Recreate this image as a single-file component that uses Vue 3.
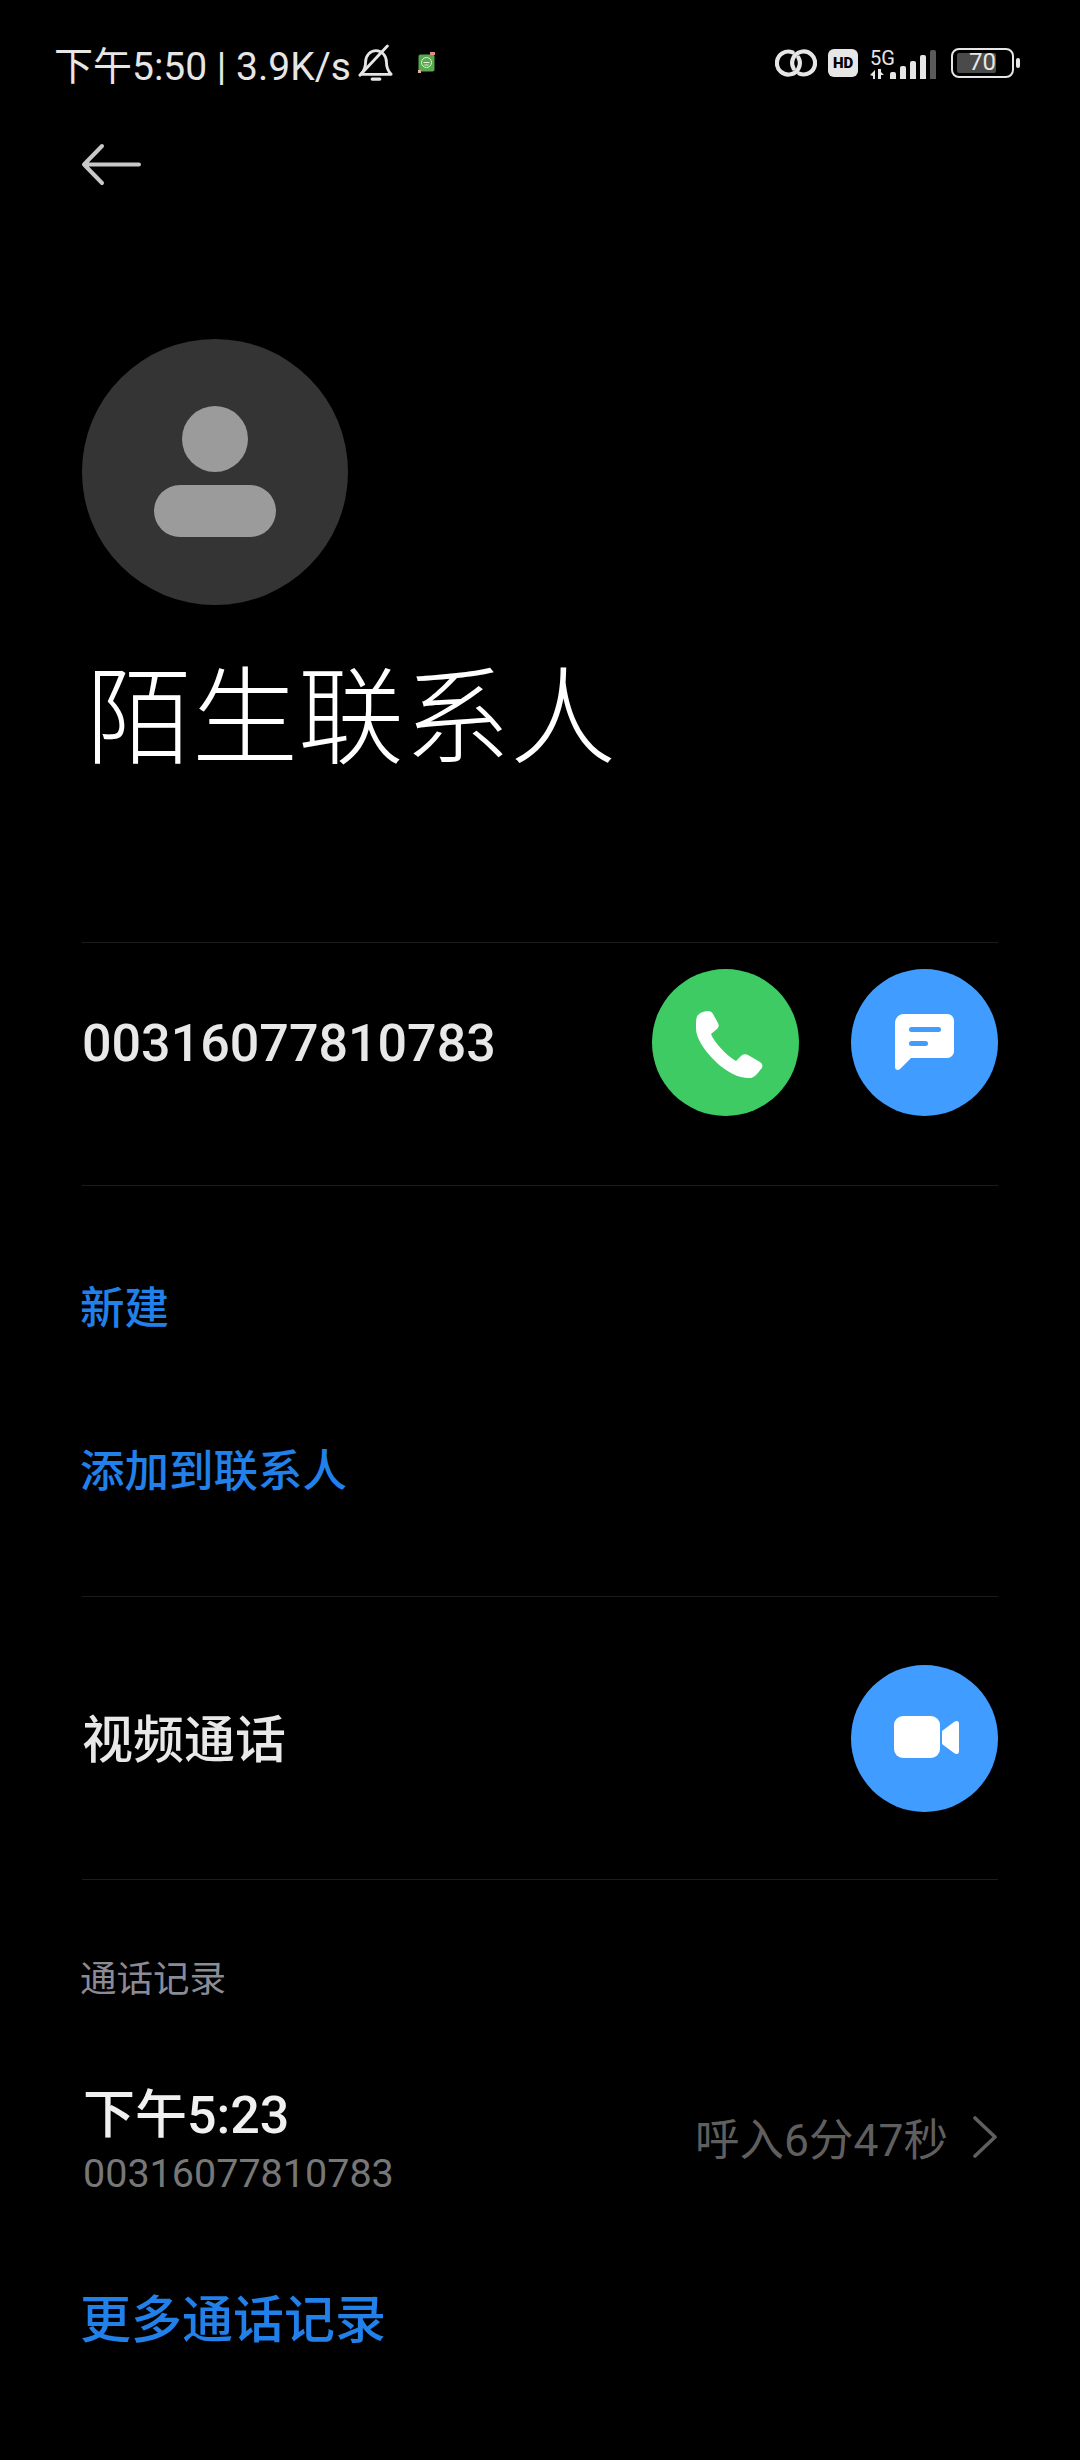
<template>
  <div class="page">
    <div class="status-bar">
      <div class="status-left">
        <span class="status-text">下午5:50 | 3.9K/s</span>
        <svg class="bell" width="36" height="38" viewBox="0 0 38 40" fill="none" stroke="#e6e6e6" stroke-width="3" stroke-linecap="round" stroke-linejoin="round">
          <path d="M3 32h32c-4-4-5-7-5-13 0-7-5-12-11-12S8 12 8 19c0 6-1 9-5 13z" />
          <path d="M2 33L31 2" />
          <path d="M15 37h8" stroke-width="3.4" />
        </svg>
        <svg class="app-icon" width="18" height="22" viewBox="0 0 18 22">
          <rect x="0.5" y="2.5" width="16" height="17" rx="2" fill="#5aa84f" />
          <circle cx="8.5" cy="10.5" r="5" fill="none" stroke="#dff0d8" stroke-width="1" />
          <path d="M5.5 10.5h6M6.5 13h4" stroke="#dff0d8" stroke-width="1" />
          <rect x="12" y="0" width="5" height="3" fill="#e08a8a" />
          <rect x="0" y="18" width="3" height="3" fill="#e0b0a0" />
        </svg>
      </div>
      <div class="status-right">
        <svg class="link-icon" width="42" height="30" viewBox="-1 0 44 30" fill="none" stroke="#e6e6e6" stroke-width="4.4" stroke-linecap="round">
          <path d="M17.500 3.900A12 12 0 1 0 23.500 9.200" />
          <path d="M24.500 26.100A12 12 0 1 0 18.500 20.800" />
        </svg>
        <div class="hd">HD</div>
        <div class="signal">
          <div class="signal-type">
            <span class="five-g">5G</span>
            <svg width="15" height="10" viewBox="0 0 15 10" fill="#e6e6e6">
              <path d="M0 6l5-5v9H3V7zM8 0h3v10H8zM11 3l3 3h-3z" />
            </svg>
          </div>
          <div class="bars">
            <span v-for="(h, i) in bars" :key="i" class="bar" :class="{ off: i === 4 }" :style="{ height: h + 'px' }"></span>
          </div>
        </div>
        <div class="battery">
          <div class="battery-body">
            <div class="battery-fill"></div>
            <span class="battery-num">70</span>
          </div>
          <div class="battery-cap"></div>
        </div>
      </div>
    </div>

    <div class="back-row">
      <svg width="60" height="44" viewBox="0 0 60 44" fill="none" stroke="#c8c8c8" stroke-width="4" stroke-linecap="round" stroke-linejoin="round">
        <path d="M58 21.500H3M21 3L3 21.500 21 40" />
      </svg>
    </div>

    <div class="avatar">
      <div class="avatar-head"></div>
      <div class="avatar-body"></div>
    </div>
    <h1 class="name">陌生联系人</h1>

    <div class="row number-row">
      <span class="number">00316077810783</span>
      <div class="actions">
        <div class="circle green">
          <svg width="90" height="90" viewBox="0 -3 90 90" fill="#fff">
            <path d="M17 14C20 11 24 10 27 10C29 10 31 11 32 13L37 22C38 24 38 26 36 28L30 33C33 41 45 54 55 60L60 55C62 53 65 53 67 54L79 61C82 63 82 66 80 68C77 72 74 76 70 77C60 78 46 72 34 60C22 48 14 36 15 25C15 20 15 16 17 14Z" />
          </svg>
        </div>
        <div class="circle blue">
          <svg width="60" height="58" viewBox="0 0 60 58">
            <path fill="#fff" d="M9 0h43c4 0 7 3 7 7v30c0 4-3 7-7 7H16L5 55c-2 2-5 1-5-2V9c0-5 4-9 9-9z" />
            <rect x="14" y="13" width="32" height="5" rx="2.500" fill="#409cff" />
            <rect x="14" y="27" width="19" height="5" rx="2.500" fill="#409cff" />
          </svg>
        </div>
      </div>
    </div>

    <div class="links">
      <a class="link">新建</a>
      <a class="link">添加到联系人</a>
    </div>

    <div class="row video-row">
      <span class="video-label">视频通话</span>
      <div class="circle blue">
        <svg class="video-icon" width="66" height="44" viewBox="0 0 66 44" fill="#fff">
          <rect x="0" y="0" width="46" height="42" rx="9" />
          <path d="M48 15l12-9c3-2 5-1 5 2v27c0 3-2 4-5 2L48 28z" />
        </svg>
      </div>
    </div>

    <div class="history">
      <div class="section-title">通话记录</div>
      <div class="call">
        <div class="call-left">
          <div class="call-time">下午5:23</div>
          <div class="call-number">00316077810783</div>
        </div>
        <div class="call-right">
          <span>呼入6分47秒</span>
          <svg width="26" height="42" viewBox="0 0 26 42" fill="none" stroke="#5f5f5f" stroke-width="3.600" stroke-linecap="round" stroke-linejoin="round">
            <path d="M3 2l20 19L3 40" />
          </svg>
        </div>
      </div>
      <a class="link more">更多通话记录</a>
    </div>
  </div>
</template>

<script setup>
const bars = [7, 13, 18, 24, 29]
</script>

<style>
html, body {
  margin: 0;
  background: #000;
}
</style>

<style scoped>
.page {
  width: 1080px;
  height: 2460px;
  overflow: hidden;
  background: #000;
  color: #fff;
  font-family: Roboto, "Noto Sans CJK SC", sans-serif;
  box-sizing: border-box;
}

.status-bar {
  display: flex;
  justify-content: space-between;
  align-items: center;
  height: 44px;
  padding: 41px 60px 0 54px;
}

.status-left,
.status-right {
  display: flex;
  align-items: center;
}

.status-text {
  font-size: 39px;
  color: #e6e6e6;
  white-space: nowrap;
}

.bell { margin-left: 7px; }
.app-icon { margin-left: 24px; }

.link-icon { margin-right: 11px; }

.hd {
  width: 30px;
  height: 28px;
  margin-right: 12px;
  border-radius: 6px;
  background: #e6e6e6;
  color: #000;
  font-size: 15px;
  font-weight: 900;
  line-height: 28px;
  text-align: center;
}

.signal {
  display: flex;
  align-items: flex-end;
  gap: 2px;
  height: 31px;
  width: 67px;
  margin-right: 14px;
}

.signal-type {
  display: flex;
  flex-direction: column;
  width: 18px;
}

.five-g {
  font-size: 20px;
  line-height: 21px;
  color: #e6e6e6;
  white-space: nowrap;
}

.bars {
  display: flex;
  align-items: flex-end;
  gap: 4px;
}

.bar {
  width: 6px;
  background: #e6e6e6;
  border-radius: 2px 2px 0 0;
}

.bar.off { background: #5a5a5a; }

.battery {
  display: flex;
  align-items: center;
  gap: 2px;
}

.battery-body {
  position: relative;
  width: 63px;
  height: 30px;
  border: 2.500px solid #e6e6e6;
  border-radius: 8px;
  box-sizing: border-box;
  padding: 3px 4px;
}

.battery-fill {
  width: 39px;
  height: 100%;
  background: #4a4a4a;
  border-radius: 2px;
}

.battery-num {
  position: absolute;
  inset: 0;
  font-size: 24px;
  line-height: 25px;
  text-align: center;
  color: #e6e6e6;
}

.battery-cap {
  width: 4px;
  height: 10px;
  border-radius: 2px;
  background: #e6e6e6;
}

.back-row {
  padding: 58px 0 0 81px;
  height: 44px;
}

.back-row svg { display: block; }

.avatar {
  width: 266px;
  height: 266px;
  margin: 152px 0 0 82px;
  border-radius: 50%;
  background: #343434;
  display: flex;
  flex-direction: column;
  align-items: center;
  padding-top: 67px;
  box-sizing: border-box;
}

.avatar-head {
  width: 66px;
  height: 66px;
  border-radius: 50%;
  background: #9b9b9b;
}

.avatar-body {
  width: 122px;
  height: 52px;
  margin-top: 13px;
  border-radius: 26px;
  background: #9b9b9b;
}

.name {
  margin: 44px 0 0 86px;
  font-size: 106px;
  line-height: 120px;
  font-weight: 300;
  font-family: "Noto Sans CJK SC", sans-serif;
  letter-spacing: 0;
}

.row {
  display: flex;
  justify-content: space-between;
  align-items: center;
  margin: 0 82px;
  border-top: 1px solid #1c1c1c;
  border-bottom: 1px solid #1c1c1c;
}

.number-row {
  height: 199px;
  padding-bottom: 43px;
  margin-top: 173px;
}

.number {
  margin-top: 2px;
  font-size: 52px;
  font-weight: 500;
  color: #e8e8e8;
}

.actions {
  display: flex;
  gap: 52px;
}

.circle {
  width: 147px;
  height: 147px;
  border-radius: 50%;
  display: flex;
  align-items: center;
  justify-content: center;
}

.green { background: #3ecb64; }
.blue { background: #409cff; }

.links {
  display: flex;
  flex-direction: column;
  gap: 115px;
  padding: 95px 0 104px 80px;
  font-size: 0;
}

.link {
  font-size: 44.5px;
  line-height: 48px;
  font-weight: 500;
  color: #2280ea;
  font-family: "Noto Sans CJK SC", sans-serif;
}

.video-row {
  height: 282px;
  border-bottom: 1px solid #1c1c1c;
}

.video-label {
  margin-bottom: 5px;
  font-size: 51px;
  font-weight: 500;
  color: #e8e8e8;
  font-family: "Noto Sans CJK SC", sans-serif;
}

.video-icon { margin-left: 4px; }

.history {
  padding: 0 82px 0 80px;
}

.section-title {
  margin-top: 76px;
  font-size: 36.5px;
  line-height: 42px;
  color: #8b8b98;
  font-family: "Noto Sans CJK SC", sans-serif;
}

.call {
  display: flex;
  justify-content: space-between;
  align-items: center;
  margin-top: 84px;
  padding-left: 3px;
}

.call-time {
  font-size: 52px;
  line-height: 67px;
  font-weight: 500;
  color: #f0f0f0;
}

.call-number {
  font-size: 39.5px;
  line-height: 50px;
  color: #777;
}

.call-right {
  display: flex;
  align-items: center;
  gap: 24px;
  margin-bottom: 8px;
  font-size: 44.5px;
  color: #5f5f5f;
}

.more {
  display: block;
  margin-top: 87px;
  font-size: 51px;
  line-height: 60px;
}
</style>
